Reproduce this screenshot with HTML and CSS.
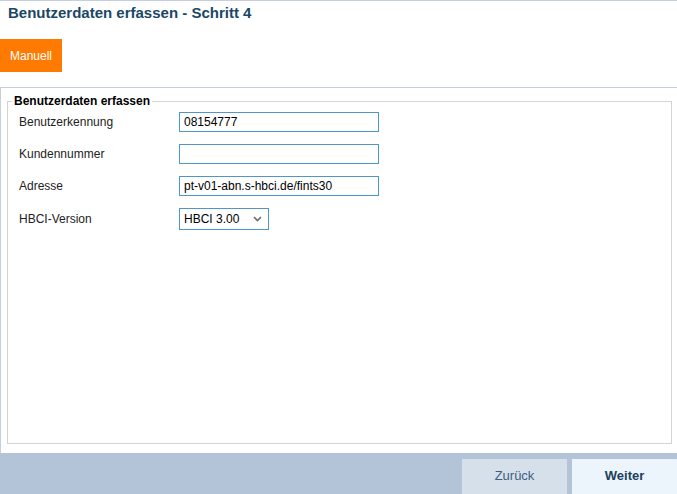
FILE: index.html
```html
<!DOCTYPE html>
<html lang="de">
<head>
    <meta charset="UTF-8">
    <meta name="viewport" content="width=device-width, initial-scale=1.0">
    <link rel="stylesheet" href="styles.css">
</head>
<body>
<div class="page">
    <!-- Kopfzeile -->
    <div class="header">
        <h1>Benutzerdaten erfassen - Schritt 4</h1>
    </div>

    <div class="toolbar">
        <button class="btn-orange">Manuell</button>
    </div>

    <!-- Formular -->
    <div class="content">
        <fieldset class="box">
            <legend>Benutzerdaten erfassen</legend>
            <div class="form-grid">
                <label>Benutzerkennung</label>
                <input type="text" value="08154777">

                <label>Kundennummer</label>
                <input type="text" value="">

                <label>Adresse</label>
                <input type="text" value="pt-v01-abn.s-hbci.de/fints30">

                <label>HBCI-Version</label>
                <div class="select-wrap">
                    <select>
                        <option>HBCI 3.00</option>
                        <option>FinTS 3.0</option>
                    </select>
                    <svg class="chevron" width="9" height="6" viewBox="0 0 9 6">
                        <path d="M1 1 L4.5 4.5 L8 1" fill="none" stroke="#6f6f6f" stroke-width="1.7"/>
                    </svg>
                </div>
            </div>
        </fieldset>
    </div>

    <!-- Fußzeile -->
    <div class="footer">
        <button class="btn-back">Zurück</button>
        <button class="btn-next">Weiter</button>
    </div>
</div>
</body>
</html>
```

FILE: styles.css
```css
html, body {
    margin: 0;
    padding: 0;
}

body {
    font-family: 'Liberation Sans', Arial, sans-serif;
    background: #fff;
}

.page {
    width: 677px;
    height: 494px;
    display: flex;
    flex-direction: column;
    overflow: hidden;
}

.header {
    border-top: 1px solid #c6d0dc;
    height: 38px;
    padding: 0 8px;
}

.header h1 {
    margin: 0;
    padding-top: 3px;
    font-size: 15px;
    font-weight: bold;
    color: #1a4766;
}

.toolbar {
    height: 48px;
}

.btn-orange {
    width: 62px;
    height: 33px;
    border: none;
    margin: 0;
    padding: 0;
    background-color: #ff7a00;
    color: white;
    font-family: inherit;
    font-size: 12px;
}

/* Inhalt */
.content {
    flex: 1;
    border-top: 1px solid #c6d0dc;
    border-left: 1px solid #c6d0dc;
    padding: 6px 5px 9px 6px;
    display: flex;
}

.box {
    flex: 1;
    margin: 0;
    padding: 4px 4px 0 4px;
    border: 1px solid #d4d4d4;
    min-width: 0;
}

.box legend {
    padding: 0 2px;
    font-size: 12px;
    font-weight: bold;
    color: #000;
}

.form-grid {
    display: grid;
    grid-template-columns: 160px auto;
    grid-auto-rows: min-content;
    row-gap: 12px;
    align-items: center;
    justify-items: start;
    margin-left: 7px;
}

.form-grid label {
    font-size: 12px;
    color: #222;
}

.form-grid input {
    box-sizing: border-box;
    width: 200px;
    height: 20px;
    margin: 0;
    padding: 0 4px;
    border: 1px solid #4f95cf;
    font-family: inherit;
    font-size: 12px;
    color: #000;
    outline: none;
}

.select-wrap {
    position: relative;
}

.select-wrap select {
    box-sizing: border-box;
    width: 90px;
    height: 22px;
    margin: 0;
    padding: 0 4px;
    border: 1px solid #4f95cf;
    border-radius: 0;
    background: #fff;
    appearance: none;
    font-family: inherit;
    font-size: 12px;
    color: #000;
}

.chevron {
    position: absolute;
    right: 7px;
    top: 8px;
    pointer-events: none;
}

/* Fußzeile */
.footer {
    height: 41px;
    background-color: #b4c4d8;
    display: flex;
    justify-content: flex-end;
    align-items: flex-end;
    gap: 5px;
}

.footer button {
    width: 105px;
    height: 35px;
    border: none;
    margin: 0;
    padding: 0 0 3px 0;
    font-family: inherit;
    font-size: 13px;
}

.btn-back {
    background-color: #d6e0eb;
    color: #3d5f80;
}

.btn-next {
    background-color: #edf5fc;
    color: #1c3f5e;
    font-weight: bold;
}
```
